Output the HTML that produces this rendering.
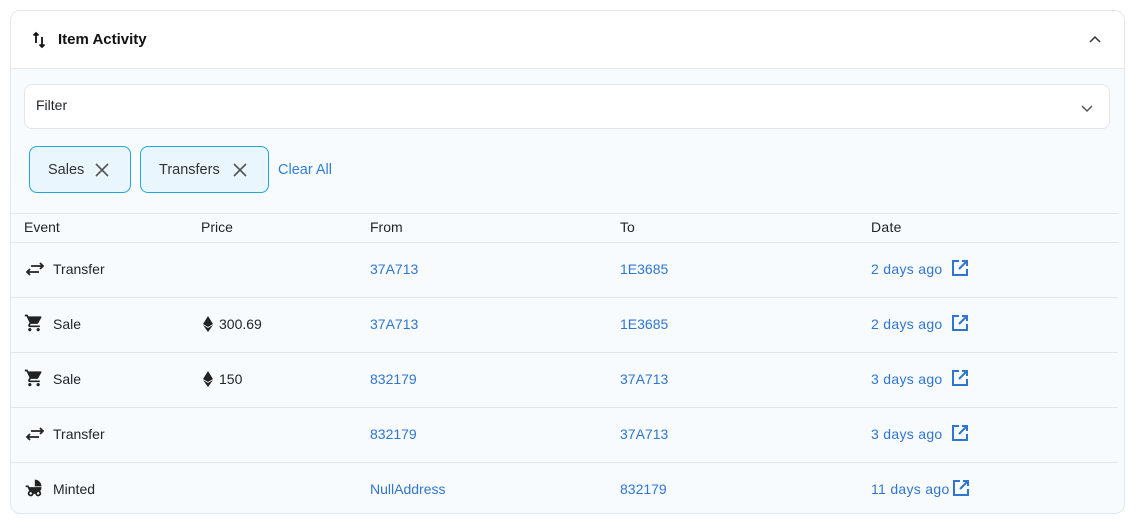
<!DOCTYPE html>
<html><head><style>
*{box-sizing:border-box;margin:0;padding:0}
body{width:1140px;height:520px;background:#fff;font-family:"Liberation Sans",sans-serif;color:#1f2328;position:relative;overflow:hidden}
.card{position:absolute;left:10px;top:10px;width:1115px;height:504px;border:1px solid #e3e6ea;border-radius:10px;overflow:hidden;background:#f8fbfe}
.hdr{height:58px;background:#fff;border-bottom:1px solid #e3e6ea;position:relative}
.hdr .t{position:absolute;left:47px;top:20px;font-weight:bold;font-size:15px;color:#111}
.filter{position:absolute;left:13px;top:73px;width:1086px;height:45px;background:#fff;border:1px solid #e3e6ea;border-radius:8px;font-size:14px;padding:12px 11px}
.chip{position:absolute;top:135px;height:47px;border:1px solid #1fa7de;border-radius:8px;background:#eaf6fd;font-size:14.5px;color:#333;padding:15px 0 0 18px}
.clear{position:absolute;left:267px;top:151px;color:#2f80d9;font-size:14.5px}
.table{position:absolute;left:0;top:202px;width:1107px;border-top:1px solid #e3e6ea}
.row{height:55px;border-bottom:1px solid #e3e6ea;position:relative;font-size:14px}
.row.h{height:29px}
.row span{position:absolute;top:18px}
.row.h span{top:5px}
.l{color:#2f76d2}
.c1{left:13px}.c1b{left:42px}.c2{left:190px}.c3{left:359px}.c4{left:609px}.c5{left:860px;letter-spacing:0.3px}
svg{position:absolute}
</style></head><body>
<div class="card">
<div class="hdr">
<svg style="left:20px;top:20px" width="16" height="18" viewBox="0 0 16 18"><path d="M5 12V2M2.5 4.5L5 2l2.5 2.5M11 6v10M8.5 13.5L11 16l2.5-2.5" stroke="#111" stroke-width="1.8" fill="none"/></svg>
<div class="t">Item Activity</div>
<svg style="left:1077px;top:22px" width="14" height="14" viewBox="0 0 14 14"><path d="M2 9l5-5 5 5" stroke="#333" stroke-width="1.5" fill="none"/></svg>
</div>
<div class="filter">Filter
<svg style="left:1055px;top:16px" width="14" height="14" viewBox="0 0 14 14"><path d="M2 5l5 5 5-5" stroke="#555" stroke-width="1.5" fill="none"/></svg></div>
<div class="chip" style="left:18px;width:102px">Sales<svg style="left:64px;top:15px" width="16" height="16" viewBox="0 0 16 16"><path d="M2 2l12 12M14 2L2 14" stroke="#555" stroke-width="1.6"/></svg></div>
<div class="chip" style="left:129px;width:129px">Transfers<svg style="left:91px;top:15px" width="16" height="16" viewBox="0 0 16 16"><path d="M2 2l12 12M14 2L2 14" stroke="#555" stroke-width="1.6"/></svg></div>
<div class="clear">Clear All</div>
<div class="table">
<div class="row h"><span class="c1">Event</span><span class="c2">Price</span><span class="c3">From</span><span class="c4">To</span><span class="c5">Date</span></div>
<div class="row"><svg style="left:15px;top:19px" width="18" height="14" viewBox="0 0 18 14"><path d="M17 4H5M14 1l3 3-3 3M1 10h12M4 7l-3 3 3 3" stroke="#222" stroke-width="1.8" fill="none"/></svg><span class="c1b">Transfer</span><span class="c3 l">37A713</span><span class="c4 l">1E3685</span><span class="c5 l">2 days ago</span><svg style="left:940px;top:16px" width="18" height="18" viewBox="0 0 18 18"><path d="M8 2H2v14h14v-6M11 2h5v5M16 2L8 10" stroke="#2f76d2" stroke-width="2" fill="none"/></svg></div>
<div class="row"><svg style="left:13px;top:15px" width="20" height="20" viewBox="0 0 24 24"><path fill="#222" d="M7 18c-1.1 0-2 .9-2 2s.9 2 2 2 2-.9 2-2-.9-2-2-2zM1 2v2h2l3.6 7.6-1.4 2.4c-.1.3-.2.6-.2 1 0 1.1.9 2 2 2h12v-2H7.4c-.1 0-.2-.1-.2-.2v-.1l.9-1.7h7.4c.8 0 1.4-.4 1.7-1l3.6-6.5c.1-.2.2-.3.2-.5 0-.6-.4-1-1-1H5.2l-.9-2H1zm16 16c-1.1 0-2 .9-2 2s.9 2 2 2 2-.9 2-2-.9-2-2-2z"/></svg><span class="c1b">Sale</span><svg style="left:192px;top:18px" width="10" height="16" viewBox="0 0 10 16"><path fill="#222" d="M5 0L0 8l5 3 5-3zM0 9l5 7 5-7-5 3z"/></svg><span style="left:208px">300.69</span><span class="c3 l">37A713</span><span class="c4 l">1E3685</span><span class="c5 l">2 days ago</span><svg style="left:940px;top:16px" width="18" height="18" viewBox="0 0 18 18"><path d="M8 2H2v14h14v-6M11 2h5v5M16 2L8 10" stroke="#2f76d2" stroke-width="2" fill="none"/></svg></div>
<div class="row"><svg style="left:13px;top:15px" width="20" height="20" viewBox="0 0 24 24"><path fill="#222" d="M7 18c-1.1 0-2 .9-2 2s.9 2 2 2 2-.9 2-2-.9-2-2-2zM1 2v2h2l3.6 7.6-1.4 2.4c-.1.3-.2.6-.2 1 0 1.1.9 2 2 2h12v-2H7.4c-.1 0-.2-.1-.2-.2v-.1l.9-1.7h7.4c.8 0 1.4-.4 1.7-1l3.6-6.5c.1-.2.2-.3.2-.5 0-.6-.4-1-1-1H5.2l-.9-2H1zm16 16c-1.1 0-2 .9-2 2s.9 2 2 2 2-.9 2-2-.9-2-2-2z"/></svg><span class="c1b">Sale</span><svg style="left:192px;top:18px" width="10" height="16" viewBox="0 0 10 16"><path fill="#222" d="M5 0L0 8l5 3 5-3zM0 9l5 7 5-7-5 3z"/></svg><span style="left:208px">150</span><span class="c3 l">832179</span><span class="c4 l">37A713</span><span class="c5 l">3 days ago</span><svg style="left:940px;top:16px" width="18" height="18" viewBox="0 0 18 18"><path d="M8 2H2v14h14v-6M11 2h5v5M16 2L8 10" stroke="#2f76d2" stroke-width="2" fill="none"/></svg></div>
<div class="row"><svg style="left:15px;top:19px" width="18" height="14" viewBox="0 0 18 14"><path d="M17 4H5M14 1l3 3-3 3M1 10h12M4 7l-3 3 3 3" stroke="#222" stroke-width="1.8" fill="none"/></svg><span class="c1b">Transfer</span><span class="c3 l">832179</span><span class="c4 l">37A713</span><span class="c5 l">3 days ago</span><svg style="left:940px;top:16px" width="18" height="18" viewBox="0 0 18 18"><path d="M8 2H2v14h14v-6M11 2h5v5M16 2L8 10" stroke="#2f76d2" stroke-width="2" fill="none"/></svg></div>
<div class="row" style="border-bottom:none"><svg style="left:13px;top:15px" width="20" height="20" viewBox="0 0 24 24"><path fill="#222" d="M13 2v8h8c0-4.4-3.6-8-8-8zm6.3 13.9C20.4 14.5 21 12.8 21 11H6.4l-.9-2H2v2h2.2s1.9 4.1 2.1 4.5C5.2 16.1 4.5 17.2 4.5 18.5 4.5 20.4 6.1 22 8 22c1.8 0 3.2-1.3 3.5-3h2.1c.3 1.7 1.7 3 3.5 3 1.9 0 3.5-1.6 3.5-3.5 0-1-.4-1.9-1.2-2.6zM8 20c-.8 0-1.5-.7-1.5-1.5S7.2 17 8 17s1.5.7 1.5 1.5S8.8 20 8 20zm9 0c-.8 0-1.5-.7-1.5-1.5S16.2 17 17 17s1.5.7 1.5 1.5S17.8 20 17 20z"/></svg><span class="c1b">Minted</span><span class="c3 l">NullAddress</span><span class="c4 l">832179</span><span class="c5 l">11 days ago</span><svg style="left:941px;top:16px" width="18" height="18" viewBox="0 0 18 18"><path d="M8 2H2v14h14v-6M11 2h5v5M16 2L8 10" stroke="#2f76d2" stroke-width="2" fill="none"/></svg></div>
</div>
</div>
</body></html>
